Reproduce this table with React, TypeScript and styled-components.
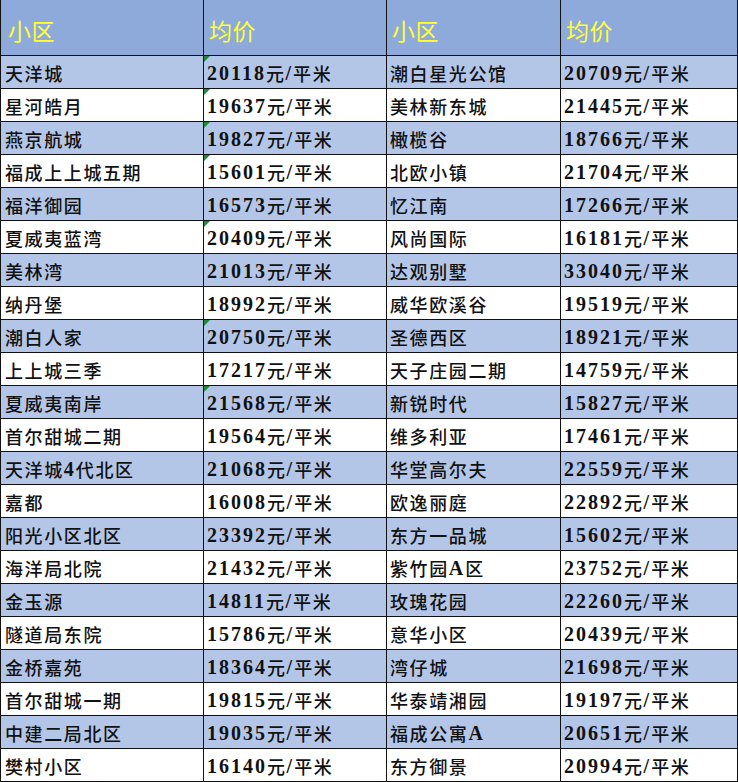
import React from 'react';
import styled, { createGlobalStyle } from 'styled-components';

const GlobalStyle = createGlobalStyle`
  html, body {
    margin: 0;
    padding: 0;
    background: #fff;
  }
`;

type Entry = { name: string; price: string; flag?: boolean };

// 左右两栏：小区 / 均价
const rows: [Entry, Entry][] = [
  [{ name: '天洋城', price: '20118', flag: true }, { name: '潮白星光公馆', price: '20709' }],
  [{ name: '星河皓月', price: '19637', flag: true }, { name: '美林新东城', price: '21445' }],
  [{ name: '燕京航城', price: '19827', flag: true }, { name: '橄榄谷', price: '18766' }],
  [{ name: '福成上上城五期', price: '15601', flag: true }, { name: '北欧小镇', price: '21704' }],
  [{ name: '福洋御园', price: '16573' }, { name: '忆江南', price: '17266' }],
  [{ name: '夏威夷蓝湾', price: '20409', flag: true }, { name: '风尚国际', price: '16181' }],
  [{ name: '美林湾', price: '21013' }, { name: '达观别墅', price: '33040' }],
  [{ name: '纳丹堡', price: '18992' }, { name: '威华欧溪谷', price: '19519' }],
  [{ name: '潮白人家', price: '20750', flag: true }, { name: '圣德西区', price: '18921' }],
  [{ name: '上上城三季', price: '17217' }, { name: '天子庄园二期', price: '14759' }],
  [{ name: '夏威夷南岸', price: '21568', flag: true }, { name: '新锐时代', price: '15827' }],
  [{ name: '首尔甜城二期', price: '19564' }, { name: '维多利亚', price: '17461' }],
  [{ name: '天洋城4代北区', price: '21068' }, { name: '华堂高尔夫', price: '22559' }],
  [{ name: '嘉都', price: '16008' }, { name: '欧逸丽庭', price: '22892' }],
  [{ name: '阳光小区北区', price: '23392' }, { name: '东方一品城', price: '15602' }],
  [{ name: '海洋局北院', price: '21432' }, { name: '紫竹园A区', price: '23752' }],
  [{ name: '金玉源', price: '14811' }, { name: '玫瑰花园', price: '22260' }],
  [{ name: '隧道局东院', price: '15786' }, { name: '意华小区', price: '20439' }],
  [{ name: '金桥嘉苑', price: '18364' }, { name: '湾仔城', price: '21698' }],
  [{ name: '首尔甜城一期', price: '19815' }, { name: '华泰靖湘园', price: '19197' }],
  [{ name: '中建二局北区', price: '19035' }, { name: '福成公寓A', price: '20651' }],
  [{ name: '樊村小区', price: '16140' }, { name: '东方御景', price: '20994' }],
];

const Sheet = styled.div`
  width: 738px;
  display: grid;
  grid-template-columns: 204px 183px 174px 177px;
  grid-auto-rows: 33px;
  grid-template-rows: 56px;
`;

const HeadCell = styled.div<{ $first?: boolean }>`
  display: flex;
  align-items: center;
  box-sizing: border-box;
  padding: 5px 0 0 ${(p) => (p.$first ? '7px' : '5px')};
  background: #8eaadb;
  border-right: 1px solid #111;
  border-bottom: 1px solid #111;
  border-left: ${(p) => (p.$first ? '1px solid #111' : 'none')};
  color: #ffff33;
  font-family: 'Noto Sans CJK SC', sans-serif;
  font-size: 23px;
  line-height: 1;
  letter-spacing: 0.5px;
`;

const Cell = styled.div<{ $first?: boolean; $shaded?: boolean; $flag?: boolean }>`
  position: relative;
  display: flex;
  align-items: center;
  box-sizing: border-box;
  padding: 2px 0 0 ${(p) => (p.$first ? '4px' : '3px')};
  background: ${(p) => (p.$shaded ? '#b4c6e7' : '#fff')};
  border-right: 1px solid #111;
  border-bottom: 1px solid #111;
  border-left: ${(p) => (p.$first ? '1px solid #111' : 'none')};
  color: #111;
  font-family: 'Noto Sans CJK SC', sans-serif;
  font-size: 18px;
  font-weight: 500;
  line-height: 1;
  letter-spacing: 1.6px;
  white-space: nowrap;

  &::before {
    content: '';
    display: ${(p) => (p.$flag ? 'block' : 'none')};
    position: absolute;
    top: 0;
    left: 0;
    border-top: 6px solid #1e8a3a;
    border-right: 6px solid transparent;
  }
`;

const Latin = styled.span`
  font-family: 'Liberation Serif', serif;
  font-weight: 700;
  font-size: 20px;
  letter-spacing: 2px;
`;

// 把英文数字和汉字分开排
const Mixed: React.FC<{ text: string }> = ({ text }) => (
  <>
    {text.split(/([\x20-\x7e]+)/).map((part, i) =>
      /^[\x20-\x7e]+$/.test(part) ? <Latin key={i}>{part}</Latin> : part
    )}
  </>
);

const App: React.FC = () => (
  <>
    <GlobalStyle />
    <Sheet>
      <HeadCell $first>小区</HeadCell>
      <HeadCell>均价</HeadCell>
      <HeadCell>小区</HeadCell>
      <HeadCell>均价</HeadCell>
      {rows.map(([left, right], i) => {
        const shaded = i % 2 === 0;
        return (
          <React.Fragment key={i}>
            <Cell $first $shaded={shaded}>
              <Mixed text={left.name} />
            </Cell>
            <Cell $shaded={shaded} $flag={left.flag}>
              <Mixed text={`${left.price}元/平米`} />
            </Cell>
            <Cell $shaded={shaded}>
              <Mixed text={right.name} />
            </Cell>
            <Cell $shaded={shaded}>
              <Mixed text={`${right.price}元/平米`} />
            </Cell>
          </React.Fragment>
        );
      })}
    </Sheet>
  </>
);

export default App;
